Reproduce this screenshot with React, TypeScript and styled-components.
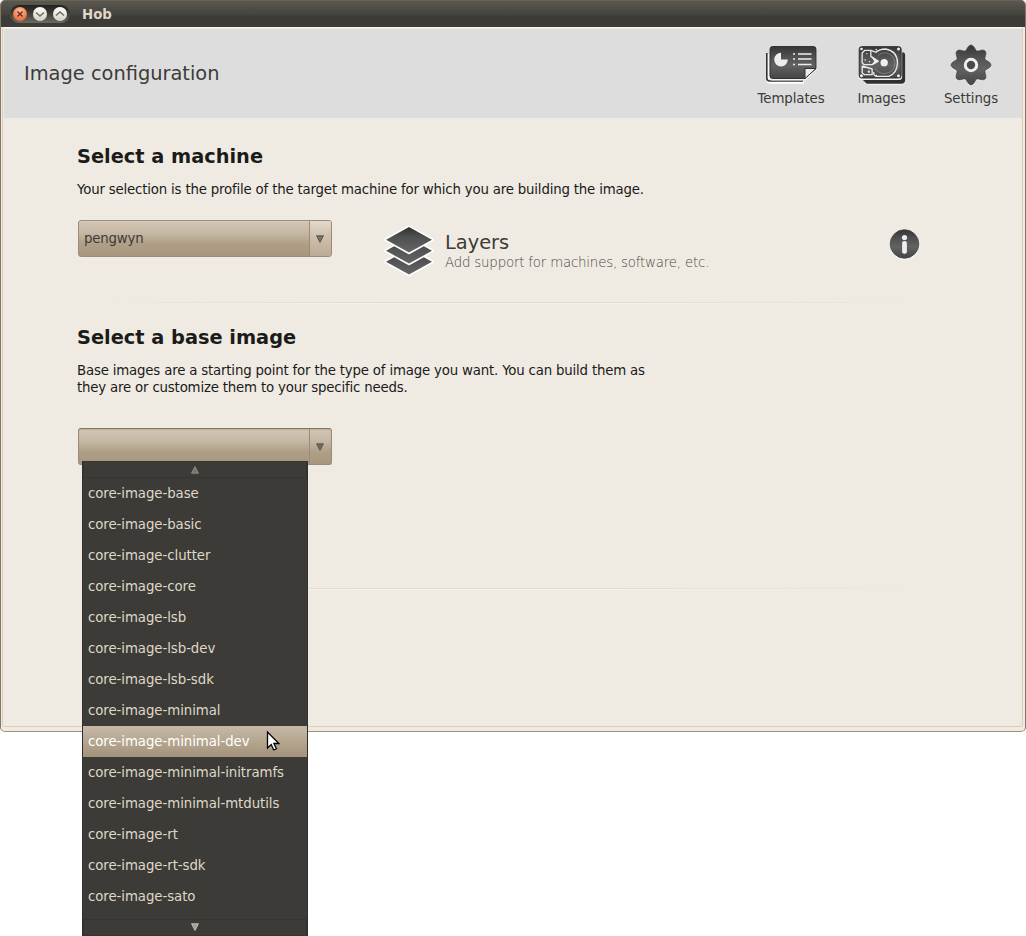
import React from 'react';
import styled, { createGlobalStyle, css } from 'styled-components';

const GlobalStyle = createGlobalStyle`
  *, *::before, *::after { box-sizing: border-box; }
  body { margin: 0; background: #fff; font-family: "DejaVu Sans", sans-serif; font-size: 13.33px; color: #1a1a1a; }
  h1, h2, p, ul { margin: 0; padding: 0; font-weight: normal; }
`;

const Desktop = styled.div`
  position: relative;
  width: 1026px;
  height: 936px;
  overflow: hidden;
`;

const Window = styled.div`
  display: flex;
  flex-direction: column;
  height: 732px;
  border: 1px solid #9c917c;
  border-top: 0;
  border-left-color: #857764;
  border-right-color: #857764;
  border-radius: 5px;
  background: #efebe2;
  overflow: hidden;
`;

const TitleBar = styled.div`
  display: flex;
  align-items: center;
  flex: none;
  height: 27px;
  margin: 0 -1px;
  padding: 0 0 0 10px;
  border-top: 1px solid #6b6350;
  background: linear-gradient(#5a5850, #45443d 50%, #3c3b37 60%, #3c3b37);
`;

const WindowButtons = styled.div`
  display: flex;
  align-items: center;
  gap: 6px;
  width: 60px;
  height: 18px;
  padding: 0 2.5px;
  border-radius: 9px;
  background: linear-gradient(#21211e, #3d3c38 45%, #6b6a65);
`;

const WindowButton = styled.span<{ $close?: boolean }>`
  display: block;
  width: 14px;
  height: 14px;
  border-radius: 50%;
  background: ${p => (p.$close
    ? 'radial-gradient(circle at 50% 30%, #ffc4a2, #f4794a 60%, #de5524)'
    : 'linear-gradient(#fffefb, #d5d1c5)')};
  svg { display: block; width: 14px; height: 14px; fill: none; stroke: ${p => (p.$close ? '#633426' : '#6e6c66')}; stroke-width: 1.5; }
`;

const WindowTitle = styled.div`
  margin-left: 12px;
  font-weight: bold;
  line-height: 17px;
  color: #dfd8c8;
`;

const Client = styled.div`
  flex: 1;
  display: flex;
  flex-direction: column;
  margin: 0 2px 4px 1px;
  border: 1px solid #dccfb9;
  border-top-color: #faf6ec;
  border-radius: 3px;
  background: #efebe2;
`;

const Header = styled.header`
  display: flex;
  justify-content: space-between;
  flex: none;
  height: 89px;
  margin: 1px 0 0 1px;
  padding: 0 7px 0 20px;
  background: #dddddd;
`;

const PageTitle = styled.h1`
  font-size: 19.4px;
  line-height: 24px;
  padding-top: 33px;
  color: #3c3b37;
`;

const Tools = styled.nav`
  display: flex;
  padding-top: 14px;
`;

const Tool = styled.div<{ $width: number }>`
  display: flex;
  flex-direction: column;
  align-items: center;
  width: ${p => p.$width}px;
  line-height: 17px;
  letter-spacing: -.08px;
  color: #3c3b37;
  svg { display: block; width: 56px; height: 47px; }
`;

const Content = styled.main`
  padding: 27px 81px 0 74px;
`;

const Section = styled.section<{ $height: number; $top?: number }>`
  height: ${p => p.$height}px;
  padding-top: ${p => p.$top ?? 0}px;
`;

const Heading = styled.h2`
  font-size: 19.35px;
  font-weight: bold;
  line-height: 24px;
  color: #1b1b1a;
`;

const Description = styled.p`
  margin-top: 12px;
  line-height: 17px;
  letter-spacing: -.185px;
  white-space: pre;
`;

const MachineRow = styled.div`
  display: flex;
  align-items: flex-start;
  margin-top: 22px;
`;

const Combo = styled.div<{ $open?: boolean }>`
  display: flex;
  flex: none;
  width: 254px;
  height: 37px;
  margin-left: 1px;
  border: 1px solid #9c8b78;
  border-radius: 3px;
  background: linear-gradient(#d3c6b5, #c5b7a3 35%, #b09f87 65%, #a8967e);
  box-shadow: inset 0 1px rgba(255, 255, 255, .15);
  line-height: 36px;
  letter-spacing: -.2px;
  color: #3c3b37;
  ${p => p.$open && css`
    margin-top: 32px;
    border-top-color: #85755f;
    box-shadow: inset 0 1px 1px rgba(70, 50, 20, .15);
  `}
`;

const ComboValue = styled.div`
  flex: 1;
  padding-left: 5px;
`;

const ComboArrow = styled.div<{ $open?: boolean }>`
  display: flex;
  align-items: center;
  justify-content: center;
  width: 22px;
  border-left: 1px solid #9c8b78;
  background: ${p => (p.$open ? 'transparent' : 'linear-gradient(#e3dacb, #cfc2b0 40%, #bbab95)')};
  border-radius: 0 2px 2px 0;
  svg { display: block; margin-right: 2px; }
`;

const LayersButton = styled.div`
  display: flex;
  flex: 1;
  margin: 5px 0 0 52px;
  svg { flex: none; display: block; }
`;

const LayersText = styled.div`
  margin: 6px 0 0 11px;
`;

const LayersTitle = styled.div`
  font-size: 19.4px;
  line-height: 24px;
  color: #3c3b37;
`;

const LayersHint = styled.div`
  font-family: "DejaVu Sans Light", "DejaVu Sans", sans-serif;
  font-weight: 200;
  line-height: 17px;
  letter-spacing: -.18px;
  margin-top: -1px;
  color: #4a4843;
`;

const InfoButton = styled.div`
  margin: 8px 20px 0 0;
  svg { display: block; }
`;

const Divider = styled.div`
  height: 2px;
  width: 864px;
  background: linear-gradient(#e1dbcd 50%, #f5f1e4 50%);
  mask-image: linear-gradient(90deg, transparent, #000 35%, #000 60%, transparent);
`;

const Menu = styled.div`
  position: absolute;
  left: 82px;
  top: 461px;
  width: 226px;
  height: 475px;
  border: 1px solid #31302c;
  border-width: 0 1px;
  background: #3c3b37;
  color: #dfd8c8;
`;

const MenuScroll = styled.div<{ $bottom?: boolean }>`
  display: flex;
  align-items: center;
  justify-content: center;
  height: 17px;
  border: 1px solid #353430;
  margin-top: ${p => (p.$bottom ? 7 : 0)}px;
  padding: 0 1px ${p => (p.$bottom ? 2 : 0)}px 0;
  svg { display: block; }
`;

const MenuItem = styled.li<{ $active?: boolean }>`
  height: 31px;
  padding: 0 5px;
  line-height: 31px;
  letter-spacing: -.07px;
  list-style: none;
  ${p => p.$active && css`
    color: #fff;
    background: linear-gradient(#c6b9a7, #b5a690 50%, #a4927b);
  `}
`;

const Pointer = styled.svg`
  position: absolute;
  left: 266px;
  top: 730px;
`;

const Triangle = ({ up, color }: { up?: boolean; color: string }) => (
  <svg width="8" height="8" viewBox="0 0 8 8">
    <path d={up ? 'M4 .6 7.4 7.2H.6Z' : 'M.6 .8h6.8L4 7.4Z'} fill={color} fillOpacity=".75" stroke={color} strokeWidth="1" />
  </svg>
);

const Shades = () => (
  <svg width="0" height="0" style={{ position: 'absolute' }}>
    <defs>
      <linearGradient id="metal" x1="0" y1="0" x2="0" y2="1">
        <stop offset="0" stopColor="#353535" />
        <stop offset=".3" stopColor="#505050" />
        <stop offset=".6" stopColor="#626262" />
        <stop offset="1" stopColor="#454545" />
      </linearGradient>
      <linearGradient id="slab" x1="0" y1="0" x2="0" y2="1">
        <stop offset="0" stopColor="#303030" />
        <stop offset=".4" stopColor="#505050" />
        <stop offset="1" stopColor="#666" />
      </linearGradient>
    </defs>
  </svg>
);

const TemplatesIcon = () => (
  <svg viewBox="0 0 56 47">
    <path d="M4.5 11v24.5q0 4 3 4H41" fill="none" stroke="#fff" strokeWidth="2.5" />
    <path d="M3.8 10v25q0 3 3 3H40" fill="none" stroke="#333" strokeWidth="1.6" />
    <path d="M9 3h42q3 0 3 3v20.500L42.500 37.500H9q-3 0-3-3V6q0-3 3-3Z" fill="#f2f2f2" />
    <path d="M9.500 3.500h41q2.500 0 2.500 2.500v19.500L42 35.500H9.500q-2.500 0-2.500-2.500V6q0-2.500 2.500-2.500Z" fill="url(#metal)" stroke="#333" />
    <path d="M42 35.500V25.500h11Z" fill="#eee" stroke="#333" strokeWidth="1" />
    <path d="M18 9.800a6.800 6.800 0 1 0 6.800 6.800H18Z" fill="#eee" />
    <path d="M35 11h13.500M35 16h13.500M35 21.500h13.500M30 11h2M30 16h2M30 21.500h2" stroke="#eee" strokeWidth="1.4" />
  </svg>
);

const ImagesIcon = () => (
  <svg viewBox="0 0 56 47">
    <g transform="translate(-4.500 -5) scale(.3333)">
      <path d="M40 126H150V46h9q9 0 9 9v74q0 11-11 11H52Z" fill="#f4f4f4" />
      <path d="M40 126H150V43h9q8 0 8 9v74q0 11-11 11H52Z" fill="#303030" />
      <rect x="26" y="24" width="132" height="102" rx="10" fill="#f2f2f2" />
      <rect x="29" y="26" width="126" height="94" rx="7" fill="url(#metal)" stroke="#2e2e2e" strokeWidth="3" />
      <g fill="none" stroke="#e8e8e8" strokeWidth="4" strokeLinejoin="round">
        <path d="M64 37 80 43Q90 33 108 33q35 6 36 41-1 31-26 41H80q-9-3-7-13" />
        <path d="M76 90q12 20 34 16 26-5 26-32-2-24-28-30-14 0-22 8" strokeWidth="2" strokeOpacity=".45" />
        <path d="M46 37H64V55L86 70 68 80H44L38 74V45Z" />
        <path d="M38 84v20l7 6H68V93L38 84" />
      </g>
      <path d="M64 53 88 69 66 82l8-12Z" fill="#eee" />
      <circle cx="104" cy="74" r="11" fill="#f0f0f0" />
      <g fill="#eee">
        <circle cx="36" cy="33" r="4" /><circle cx="147" cy="33" r="4.500" />
        <circle cx="36" cy="113" r="4.500" /><circle cx="147" cy="113" r="4.500" />
        <circle cx="52" cy="47" r="2" /><circle cx="47" cy="66" r="2.500" /><circle cx="60" cy="71" r="2" />
        <circle cx="58" cy="101" r="3.500" /><circle cx="80" cy="35" r="2.500" /><circle cx="80" cy="113" r="2.500" />
      </g>
    </g>
  </svg>
);

const gearPath = (() => {
  const pts: string[] = [];
  for (let i = 0; i <= 144; i++) {
    const a = (i / 144) * Math.PI * 2;
    const r = 15.2 + 4.7 * Math.pow((1 + Math.cos(a * 8)) / 2, 0.95);
    pts.push(`${(28 + r * Math.sin(a)).toFixed(2)} ${(22 - r * Math.cos(a)).toFixed(2)}`);
  }
  return `M${pts.join('L')}Z`;
})();

const SettingsIcon = () => (
  <svg viewBox="0 0 56 47">
    <path d={gearPath} fill="#fff" transform="translate(0 1)" />
    <path d={gearPath} fill="url(#metal)" stroke="#444" strokeWidth=".7" />
    <circle cx="28" cy="22" r="5.700" fill="#4a4a4a" stroke="#f0f0f0" strokeWidth="3" />
  </svg>
);

const LayersIcon = () => (
  <svg width="50" height="52" viewBox="0 0 50 52">
    {[36.8, 25.8, 14.8].map(y => (
      <path key={y} d={`M25 ${y - 12.8} 48 ${y} 25 ${y + 12.8} 2 ${y}Z`} fill="url(#slab)" stroke="#fff" strokeWidth="3.4" strokeLinejoin="round" paintOrder="stroke" />
    ))}
  </svg>
);

const InfoIcon = () => (
  <svg width="32" height="32" viewBox="0 0 32 32">
    <circle cx="15.500" cy="16.800" r="14.800" fill="#fff" />
    <circle cx="15.500" cy="16" r="14.300" fill="url(#metal)" stroke="#444" strokeWidth=".8" />
    <circle cx="15.500" cy="9.500" r="2.600" fill="#eee" />
    <rect x="13.100" y="13" width="4.800" height="12.700" rx="2" fill="#eee" />
  </svg>
);

const images = ['base', 'basic', 'clutter', 'core', 'lsb', 'lsb-dev', 'lsb-sdk', 'minimal', 'minimal-dev',
  'minimal-initramfs', 'minimal-mtdutils', 'rt', 'rt-sdk', 'sato'];

export default function App() {
  return (
    <Desktop>
      <GlobalStyle />
      <Shades />
      <Window>
        <TitleBar>
          <WindowButtons>
            <WindowButton $close><svg viewBox="0 0 14 14"><path d="m4.500 4.500 5 5m0-5-5 5" /></svg></WindowButton>
            <WindowButton><svg viewBox="0 0 14 14"><path d="m3 5.500 4 3.500 4-3.500" /></svg></WindowButton>
            <WindowButton><svg viewBox="0 0 14 14"><path d="m3 8.500 4-3.500 4 3.500" /></svg></WindowButton>
          </WindowButtons>
          <WindowTitle>Hob</WindowTitle>
        </TitleBar>
        <Client>
          <Header>
            <PageTitle>Image configuration</PageTitle>
            <Tools>
              <Tool $width={90}><TemplatesIcon />Templates</Tool>
              <Tool $width={91}><ImagesIcon />Images</Tool>
              <Tool $width={88}><SettingsIcon />Settings</Tool>
            </Tools>
          </Header>
          <Content>
            <Section $height={157}>
              <Heading>Select a machine</Heading>
              <Description>Your selection is the profile of the target machine for which you are building the image.</Description>
              <MachineRow>
                <Combo>
                  <ComboValue>pengwyn</ComboValue>
                  <ComboArrow><Triangle color="#5d574f" /></ComboArrow>
                </Combo>
                <LayersButton>
                  <LayersIcon />
                  <LayersText>
                    <LayersTitle>Layers</LayersTitle>
                    <LayersHint>Add support for machines, software, etc.</LayersHint>
                  </LayersText>
                </LayersButton>
                <InfoButton><InfoIcon /></InfoButton>
              </MachineRow>
            </Section>
            <Divider />
            <Section $height={284} $top={22}>
              <Heading>Select a base image</Heading>
              <Description>{'Base images are a starting point for the type of image you want. You can build them as\nthey are or customize them to your specific needs.'}</Description>
              <Combo $open>
                <ComboValue />
                <ComboArrow $open><Triangle color="#5d574f" /></ComboArrow>
              </Combo>
            </Section>
            <Divider />
          </Content>
        </Client>
      </Window>
      <Menu>
        <MenuScroll><Triangle up color="#8d8980" /></MenuScroll>
        <ul>
          {images.map(name => (
            <MenuItem key={name} $active={name === 'minimal-dev'}>core-image-{name}</MenuItem>
          ))}
        </ul>
        <MenuScroll $bottom><Triangle color="#c5bfb2" /></MenuScroll>
      </Menu>
      <Pointer width="14" height="22" viewBox="0 0 14 22">
        <path d="M1.500 2v16l3.700-3.500 2.500 5.500 2.700-1.200-2.500-5.300h5Z" fill="#fff" stroke="#000" strokeWidth="1.300" />
      </Pointer>
    </Desktop>
  );
}
